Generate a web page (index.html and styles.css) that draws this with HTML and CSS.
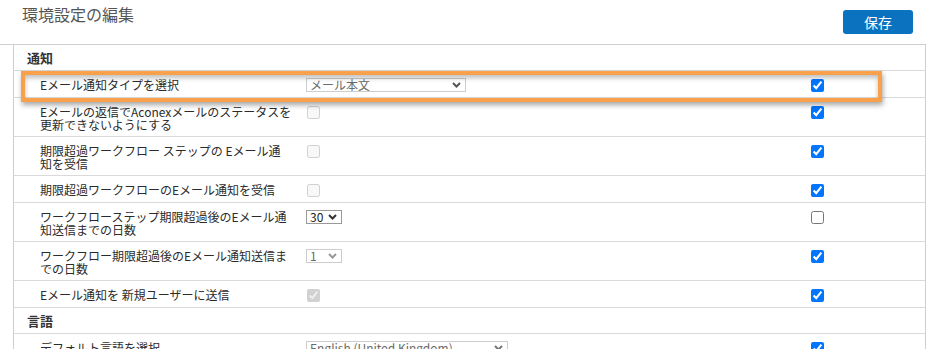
FILE: index.html
```html
<!DOCTYPE html>
<html lang="ja">
<head>
<meta charset="utf-8">
<title>環境設定の編集</title>
<link rel="stylesheet" href="styles.css">
</head>
<body>
<header class="page-header">
  <h1 class="page-title">環境設定の編集</h1>
  <button class="btn-save" type="button">保存</button>
</header>
<div class="prefs">
  <div class="section">通知</div>

  <div class="row">
    <div class="label">Eメール通知タイプを選択</div>
    <div class="control">
      <span class="select select-wide">
        <select class="muted"><option>メール本文</option></select>
        <svg class="chev" width="9" height="6" viewBox="0 0 9 6"><path d="M1 1 L4.5 4.5 L8 1" fill="none" stroke="#555" stroke-width="2"/></svg>
      </span>
    </div>
    <div class="check"><input type="checkbox" checked></div>
  </div>

  <div class="row">
    <div class="label">Eメールの返信でAconexメールのステータスを<br>更新できないようにする</div>
    <div class="control"><input class="cb-inline" type="checkbox" disabled></div>
    <div class="check"><input type="checkbox" checked></div>
  </div>

  <div class="row">
    <div class="label">期限超過ワークフロー ステップの Eメール通<br>知を受信</div>
    <div class="control"><input class="cb-inline" type="checkbox" disabled></div>
    <div class="check"><input type="checkbox" checked></div>
  </div>

  <div class="row">
    <div class="label">期限超過ワークフローのEメール通知を受信</div>
    <div class="control"><input class="cb-inline" type="checkbox" disabled></div>
    <div class="check"><input type="checkbox" checked></div>
  </div>

  <div class="row">
    <div class="label">ワークフローステップ期限超過後のEメール通<br>知送信までの日数</div>
    <div class="control">
      <span class="select select-num select-active">
        <select><option>30</option></select>
        <svg class="chev" width="9" height="6" viewBox="0 0 9 6"><path d="M1 1 L4.5 4.5 L8 1" fill="none" stroke="#333" stroke-width="2"/></svg>
      </span>
    </div>
    <div class="check"><input type="checkbox"></div>
  </div>

  <div class="row">
    <div class="label">ワークフロー期限超過後のEメール通知送信ま<br>での日数</div>
    <div class="control">
      <span class="select select-num">
        <select class="muted"><option>1</option></select>
        <svg class="chev" width="9" height="6" viewBox="0 0 9 6"><path d="M1 1 L4.5 4.5 L8 1" fill="none" stroke="#999" stroke-width="2"/></svg>
      </span>
    </div>
    <div class="check"><input type="checkbox" checked></div>
  </div>

  <div class="row">
    <div class="label">Eメール通知を 新規ユーザーに送信</div>
    <div class="control"><input class="cb-inline" type="checkbox" checked disabled></div>
    <div class="check"><input type="checkbox" checked></div>
  </div>

  <div class="section">言語</div>

  <div class="row">
    <div class="label">デフォルト言語を選択</div>
    <div class="control">
      <span class="select select-lang">
        <select class="muted"><option>English (United Kingdom)</option></select>
        <svg class="chev" width="9" height="6" viewBox="0 0 9 6"><path d="M1 1 L4.5 4.5 L8 1" fill="none" stroke="#777" stroke-width="2"/></svg>
      </span>
    </div>
    <div class="check"><input type="checkbox" checked></div>
  </div>

  <div class="highlight"></div>
</div>
</body>
</html>
```

FILE: styles.css
```css
* { box-sizing: border-box; }

html, body {
  margin: 0;
  padding: 0;
  background: #fff;
}

body {
  font-family: "Noto Sans CJK JP", "Noto Sans", sans-serif;
  color: #333;
  width: 929px;
  overflow: hidden;
}

.page-header {
  width: 926px;
  height: 45px;
  border-bottom: 1px solid #cfcfcf;
  display: flex;
  justify-content: space-between;
  align-items: flex-start;
}

.page-title {
  margin: 4px 0 0 22px;
  font-size: 16px;
  line-height: 20px;
  font-weight: normal;
  color: #555;
}

.btn-save {
  margin: 10px 13px 0 0;
  width: 70px;
  height: 24px;
  padding: 0;
  border: none;
  border-radius: 3px;
  background: #0b72bf;
  color: #fff;
  font-family: "Noto Sans CJK JP", sans-serif;
  font-size: 14px;
  line-height: 24px;
}

.prefs {
  position: relative;
  margin-left: 13px;
  width: 913px;
  border-left: 1px solid #cfcfcf;
  border-right: 1px solid #cfcfcf;
}

.section {
  padding: 6px 13px;
  font-size: 13px;
  line-height: 13px;
  font-weight: bold;
  color: #333;
  border-bottom: 1px solid #dadada;
}

.row {
  display: grid;
  grid-template-columns: 292px 505px 1fr;
  align-items: start;
  padding: 7px 0 5px;
  border-bottom: 1px solid #dadada;
}

.label {
  padding-left: 26px;
  font-size: 12px;
  line-height: 13px;
  white-space: nowrap;
  color: #2b2b2b;
}

.control {
  min-height: 14px;
}

.check input,
.cb-inline {
  display: block;
  width: 13px;
  height: 13px;
  margin: 1px 0 0 0;
}

.cb-inline {
  margin-left: 1px;
}

.select {
  position: relative;
  display: block;
  height: 14px;
}

.select select {
  -webkit-appearance: none;
  appearance: none;
  display: block;
  width: 100%;
  height: 14px;
  margin: 0;
  padding: 0 0 0 3px;
  border: 1px solid #cdcdcd;
  border-radius: 0;
  background: #fff;
  font-family: "Noto Sans CJK JP", sans-serif;
  font-size: 12px;
  line-height: 12px;
  color: #222;
}

.select select.muted {
  color: #6a6a6a;
}

.select-active select {
  border-color: #9a9a9a;
}

.select-wide { width: 160px; }
.select-num { width: 36px; }
.select-lang { width: 202px; }

.chev {
  position: absolute;
  right: 5px;
  top: 4px;
  pointer-events: none;
}

.highlight {
  position: absolute;
  left: 7px;
  top: 26px;
  width: 861px;
  height: 31px;
  border: 4px solid #f8a04a;
  box-shadow: 1px 3px 5px rgba(0, 0, 0, 0.35), inset 0 3px 5px rgba(0, 0, 0, 0.25);
  pointer-events: none;
}
```
